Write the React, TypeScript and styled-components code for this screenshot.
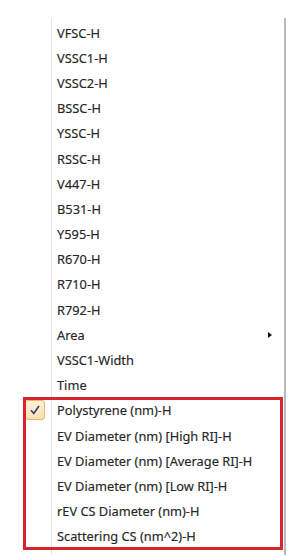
import styled, { createGlobalStyle } from 'styled-components'

const GlobalStyle = createGlobalStyle`
  html, body {
    margin: 0;
    padding: 0;
    background: #ffffff;
  }
  body {
    font-family: "Noto Sans", "Open Sans", sans-serif;
  }
`

const Page = styled.div`
  width: 298px;
  height: 555px;
  overflow: hidden;
  background: #fff;
`

const Menu = styled.div`
  margin-top: 18px;
  width: 284px;
  border-right: 2px solid #b9b9bd;
  padding-top: 2px;
  min-height: 540px;
  background: linear-gradient(to right, #fff 0, #fff 51px, #e3e4e9 51px, #e3e4e9 52px, #fff 52px);
`

const Item = styled.div`
  height: 25.2px;
  display: flex;
  align-items: center;
  position: relative;
`

const Gutter = styled.div`
  width: 52px;
  flex: 0 0 52px;
  display: flex;
  align-items: center;
  justify-content: flex-start;
  padding-left: 25px;
  box-sizing: border-box;
`

const Label = styled.span`
  flex: 1;
  padding-left: 5px;
  font-size: 12.8px;
  color: #262626;
  white-space: nowrap;
  -webkit-text-stroke: 0.15px #262626;
`

const SubArrow = styled.span`
  width: 0;
  height: 0;
  margin-right: 12px;
  border-top: 3.5px solid transparent;
  border-bottom: 3.5px solid transparent;
  border-left: 4px solid #111;
`

const CheckBox = styled.span`
  width: 20px;
  height: 20px;
  box-sizing: border-box;
  border: 1px solid #eab66c;
  border-radius: 3px;
  background: linear-gradient(#fdf0d6, #fbe1b2);
  display: flex;
  align-items: center;
  justify-content: center;
`

const Highlight = styled.div`
  position: relative;
  &::after {
    content: '';
    position: absolute;
    left: 23px;
    right: 1px;
    top: -1px;
    bottom: -1px;
    border: 3px solid #d6252d;
    pointer-events: none;
  }
`

const plain = [
  'VFSC-H',
  'VSSC1-H',
  'VSSC2-H',
  'BSSC-H',
  'YSSC-H',
  'RSSC-H',
  'V447-H',
  'B531-H',
  'Y595-H',
  'R670-H',
  'R710-H',
  'R792-H',
]

const highlighted = [
  'Polystyrene (nm)-H',
  'EV Diameter (nm) [High RI]-H',
  'EV Diameter (nm) [Average RI]-H',
  'EV Diameter (nm) [Low RI]-H',
  'rEV CS Diameter (nm)-H',
  'Scattering CS (nm^2)-H',
]

const Check = () => (
  <svg width="12" height="12" viewBox="0 0 12 12">
    <path d="M2 6.3 L4.8 9.5 L10 2" fill="none" stroke="#2f3f86" strokeWidth="1.6" />
  </svg>
)

const App = () => {
  return (
    <>
      <GlobalStyle />
      <Page>
        <Menu>
          {plain.map((name) => (
            <Item key={name}>
              <Gutter />
              <Label>{name}</Label>
            </Item>
          ))}
          <Item>
            <Gutter />
            <Label>Area</Label>
            <SubArrow />
          </Item>
          <Item>
            <Gutter />
            <Label>VSSC1-Width</Label>
          </Item>
          <Item>
            <Gutter />
            <Label>Time</Label>
          </Item>
          <Highlight>
            {highlighted.map((name, i) => (
              <Item key={name}>
                <Gutter>{i === 0 && <CheckBox><Check /></CheckBox>}</Gutter>
                <Label>{name}</Label>
              </Item>
            ))}
          </Highlight>
        </Menu>
      </Page>
    </>
  )
}

export default App
